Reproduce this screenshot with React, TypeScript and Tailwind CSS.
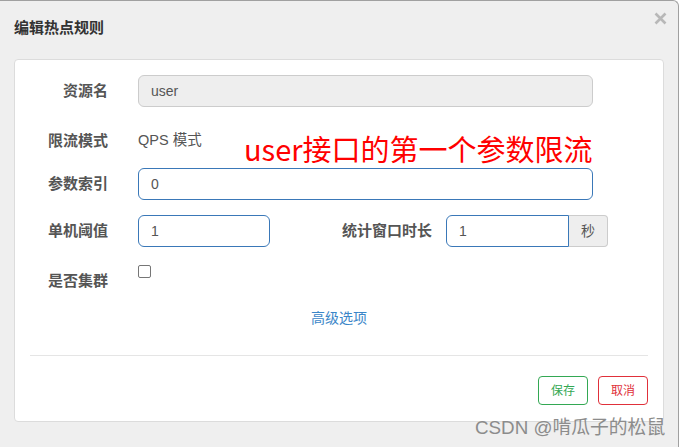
import React from 'react';

const font = { fontFamily: '"Liberation Sans", "Noto Sans CJK SC", sans-serif' };

// Label cell used in every form row
const Label: React.FC<{ children: React.ReactNode; className?: string }> = ({ children, className }) => (
  <div className={`text-right text-[15px] font-bold text-[#555] ${className ?? 'w-[93px]'}`}>{children}</div>
);

export default function App() {
  return (
    <div className="relative w-[680px] h-[447px] overflow-hidden bg-white" style={font}>
      {/* Dialog */}
      <div className="w-[679px] h-[470px] bg-[#efefef] border-t border-r border-[#a0a0a0] rounded-tr-[6px]">
        {/* Header */}
        <div className="relative h-[58px] pl-[14px] pt-[16px]">
          <h4 className="text-[15px] font-bold text-[#333] leading-[22px]">编辑热点规则</h4>
          <button className="absolute right-[11px] top-[11px] w-[13px] h-[13px]">
            <svg viewBox="0 0 13 13" className="w-[13px] h-[13px]">
              <path d="M1.5 1.5 L11.5 11.5 M11.5 1.5 L1.5 11.5" stroke="#b8b8b8" strokeWidth="2.6" strokeLinecap="butt" />
            </svg>
          </button>
        </div>

        {/* Body card */}
        <div className="relative ml-[14px] w-[650px] h-[363px] bg-white border border-[#dcdcdc] rounded-[4px] pt-[15px]">
          {/* 资源名 */}
          <div className="flex items-center h-[32px]">
            <Label>资源名</Label>
            <div className="ml-[30px] w-[455px] h-[32px] flex items-center pl-[12px] bg-[#eeeeee] border border-[#cccccc] rounded-[6px] text-[14px] text-[#555]">
              user
            </div>
          </div>

          {/* 限流模式 */}
          <div className="flex items-center h-[32px] mt-[18px]">
            <Label>限流模式</Label>
            <div className="ml-[30px] text-[14.5px] text-[#555]">QPS 模式</div>
          </div>

          {/* 参数索引 */}
          <div className="flex items-center h-[32px] mt-[11px]">
            <Label>参数索引</Label>
            <div className="ml-[30px] w-[455px] h-[32px] flex items-center pl-[12px] bg-white border border-[#3a78b8] rounded-[6px] text-[14px] text-[#555]">
              0
            </div>
          </div>

          {/* 单机阈值 / 统计窗口时长 */}
          <div className="flex items-center h-[32px] mt-[15px]">
            <Label>单机阈值</Label>
            <div className="ml-[30px] w-[132px] h-[32px] flex items-center pl-[12px] bg-white border border-[#3a78b8] rounded-[6px] text-[14px] text-[#555]">
              1
            </div>
            <Label className="w-[162px]">统计窗口时长</Label>
            <div className="ml-[14px] flex h-[32px]">
              <div className="w-[123px] h-[32px] flex items-center pl-[12px] bg-white border border-[#3a78b8] rounded-l-[6px] text-[14px] text-[#555]">
                1
              </div>
              <div className="w-[39px] h-[32px] flex items-center justify-center bg-[#eeeeee] border border-l-0 border-[#cccccc] rounded-r-[4px] text-[14px] text-[#555]">
                秒
              </div>
            </div>
          </div>

          {/* 是否集群 */}
          <div className="flex items-start h-[32px] mt-[17px]">
            <Label className="w-[93px] mt-[6px]">是否集群</Label>
            <div className="ml-[30px] mt-[1px] w-[13px] h-[13px] border border-[#767676] rounded-[2px] bg-white" />
          </div>

          {/* 高级选项 */}
          <div className="mt-[12px] h-[20px] flex justify-center">
            <a className="text-[14px] text-[#3a86c8] leading-[20px]">高级选项</a>
          </div>

          {/* Divider */}
          <div className="mx-[15px] mt-[27px] border-t border-[#e5e5e5]" />

          {/* Footer buttons */}
          <div className="flex justify-end gap-[10px] mr-[15px] mt-[20px]">
            <button className="w-[50px] h-[29px] border border-[#33a853] rounded-[4px] text-[12px] text-[#33a853] bg-white">保存</button>
            <button className="w-[50px] h-[29px] border border-[#e0303a] rounded-[4px] text-[12px] text-[#e0303a] bg-white">取消</button>
          </div>

          {/* Red annotation over the form */}
          <div
            className="absolute left-[229px] top-[74px] text-[29px] leading-none text-[#ff0000] whitespace-nowrap"
            style={{ fontFamily: '"Noto Sans CJK SC", sans-serif' }}
          >
            user接口的第一个参数限流
          </div>
        </div>
      </div>

      {/* Watermark */}
      <div className="absolute left-[475px] top-[417px] text-[18.8px] leading-[22px] text-[#8c8c8c] whitespace-nowrap">
        CSDN @啃瓜子的松鼠
      </div>
    </div>
  );
}
